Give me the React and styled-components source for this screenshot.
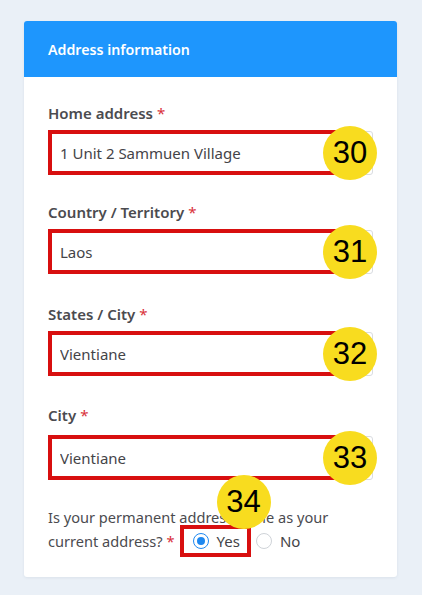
import React from "react";
import styled, { createGlobalStyle } from "styled-components";

const GlobalStyle = createGlobalStyle`
  html, body {
    margin: 0;
    padding: 0;
    background: #eaf0f7;
    font-family: "Noto Sans", "Open Sans", sans-serif;
  }
  * { box-sizing: border-box; }
`;

const Page = styled.div`
  padding: 21px 25px 18px 24px;
  min-height: 595px;
`;

const Card = styled.div`
  width: 373px;
  background: #fff;
  border-radius: 3px;
  box-shadow: 0 1px 3px rgba(40, 60, 90, 0.08);
`;

const Header = styled.div`
  height: 56px;
  background: #1e96fd;
  color: #fff;
  display: flex;
  align-items: center;
  padding: 0 24px;
  font-size: 14.2px;
  font-weight: 600;
  border-radius: 3px 3px 0 0;
`;

const Body = styled.div`
  padding: 26px 24px 24px 24px;
  display: flex;
  flex-direction: column;
`;

const Field = styled.div`
  display: flex;
  flex-direction: column;
  gap: ${(p) => p.$gap}px;
  margin-bottom: ${(p) => p.$space}px;
`;

const Label = styled.div`
  font-size: 15px;
  font-weight: 600;
  line-height: 20px;
  color: #4b4b4f;
`;

const Req = styled.span`
  color: #d9303a;
  margin-left: 4px;
  font-weight: 400;
`;

const InputWrap = styled.div`
  position: relative;
`;

const Input = styled.input`
  width: 100%;
  height: 44px;
  border: 1px solid #d9dce0;
  border-radius: 3px;
  padding: 0 11px;
  font-family: inherit;
  font-size: 15px;
  color: #444448;
  background: #fff;
  outline: none;
`;

const Highlight = styled.div`
  position: absolute;
  left: ${(p) => p.$left}px;
  top: ${(p) => p.$top}px;
  width: ${(p) => p.$w}px;
  height: ${(p) => p.$h}px;
  border: 4px solid #d80f0f;
  pointer-events: none;
`;

const Badge = styled.div`
  position: absolute;
  left: ${(p) => p.$x - 27}px;
  top: ${(p) => p.$y - 27}px;
  width: 54px;
  height: 54px;
  border-radius: 50%;
  background: #f8dc1f;
  color: #000;
  font-family: "Liberation Sans", Arial, sans-serif;
  font-size: 31px;
  display: flex;
  align-items: center;
  justify-content: center;
  pointer-events: none;
  z-index: 2;
`;

const Question = styled.div`
  font-size: 14.6px;
  line-height: 24px;
  color: #4b4b4f;
`;

const Radio = styled.label`
  position: relative;
  display: inline-flex;
  align-items: center;
  gap: 8px;
  height: 24px;
  margin-left: ${(p) => p.$ml}px;
  vertical-align: top;
  color: #444448;
  font-size: 15px;
`;

const Dot = styled.span`
  width: 16px;
  height: 16px;
  border-radius: 50%;
  border: 1px solid ${(p) => (p.$on ? "#1e88f0" : "#cfd3d8")};
  display: inline-flex;
  align-items: center;
  justify-content: center;
  background: #fff;
  &::after {
    content: "";
    width: 8px;
    height: 8px;
    border-radius: 50%;
    background: ${(p) => (p.$on ? "#1e88f0" : "transparent")};
  }
`;

const fields = [
  { label: "Home address", value: "1 Unit 2 Sammuen Village", n: 30, gap: 8, space: 27 },
  { label: "Country / Territory", value: "Laos", n: 31, gap: 8, space: 30 },
  { label: "States / City", value: "Vientiane", n: 32, gap: 8, space: 29 },
  { label: "City", value: "Vientiane", n: 33, gap: 11, space: 25 },
];

export default function App() {
  return (
    <>
      <GlobalStyle />
      <Page>
        <Card>
          <Header>Address information</Header>
          <Body>
            {fields.map((f) => (
              <Field key={f.n} $gap={f.gap} $space={f.space}>
                <Label>
                  {f.label}
                  <Req>*</Req>
                </Label>
                <InputWrap>
                  <Input readOnly value={f.value} />
                  <Highlight $left={0} $top={-1} $w={296} $h={45} />
                  <Badge $x={302} $y={22}>
                    {f.n}
                  </Badge>
                </InputWrap>
              </Field>
            ))}
            <Question>
              Is your permanent address same as your current address?
              <Req>*</Req>
              <Radio $ml={18}>
                <Dot $on />
                Yes
                <Highlight $left={-13} $top={-4} $w={71} $h={32} />
                <Badge $x={51} $y={-27}>34</Badge>
              </Radio>
              <Radio $ml={16}>
                <Dot />
                No
              </Radio>
            </Question>
          </Body>
        </Card>
      </Page>
    </>
  );
}
